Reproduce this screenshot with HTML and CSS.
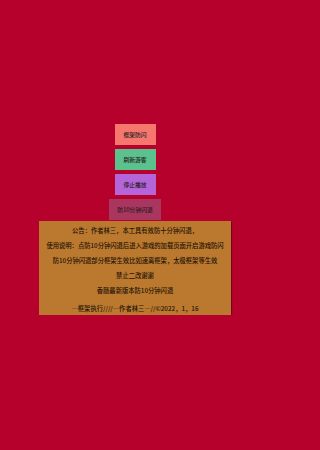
FILE: index.html
```html
<!DOCTYPE html>
<html lang="zh">
<head>
<meta charset="utf-8">
<link rel="stylesheet" href="styles.css">
</head>
<body>
<main class="page">
  <div class="btn btn-salmon">框架防闪</div>
  <div class="btn btn-green">刷新游客</div>
  <div class="btn btn-purple">停止播放</div>
  <div class="btn btn-wide btn-rose">防10分钟闪退</div>
  <section class="panel">
    <p class="line">公告：作者林三，本工具有效防十分钟闪退，</p>
    <p class="line">使用说明：点防10分钟闪退后进入游戏的加载页面开启游戏防闪</p>
    <p class="line">防10分钟闪退部分框架生效比如速离框架，太极框架等生效</p>
    <p class="line">禁止二改谢谢</p>
    <p class="line">香肠最新版本防10分钟闪退</p>
    <p class="line sign">—框架执行////—作者林三—//©2022，1，16</p>
  </section>
</main>
</body>
</html>
```
FILE: styles.css
```css
html, body {
  margin: 0;
  padding: 0;
  background: #b5012b;
  min-height: 100%;
}
.page {
  width: 270px;
  display: flex;
  flex-direction: column;
  align-items: center;
  padding-top: 124px;
  gap: 4px;
  font-family: "Noto Sans CJK SC", "Noto Sans", sans-serif;
}
.btn {
  width: 41px;
  height: 21px;
  box-sizing: border-box;
  display: flex;
  align-items: center;
  justify-content: center;
  font-size: 5.8px;
  font-weight: 500;
  color: #2a1c1e;
  white-space: nowrap;
}
.btn-wide { width: 52px; }
.btn-salmon { background: #f5776e; }
.btn-green { background: #5bc28e; }
.btn-purple { background: #b465da; }
.btn-rose { background: #a9365e; }
.panel {
  margin-top: -3px;
  width: 192px;
  height: 94px;
  box-sizing: border-box;
  background: #bb792f;
  box-shadow: 1px 1px 1px rgba(60, 0, 10, 0.45);
  padding-top: 1.5px;
  display: flex;
  flex-direction: column;
  align-items: center;
}
.line {
  margin: 0;
  font-size: 6.3px;
  font-weight: 500;
  line-height: 15px;
  color: #1e1206;
  white-space: nowrap;
}
.sign {
  margin-top: 5.5px;
  line-height: 12px;
}
```
